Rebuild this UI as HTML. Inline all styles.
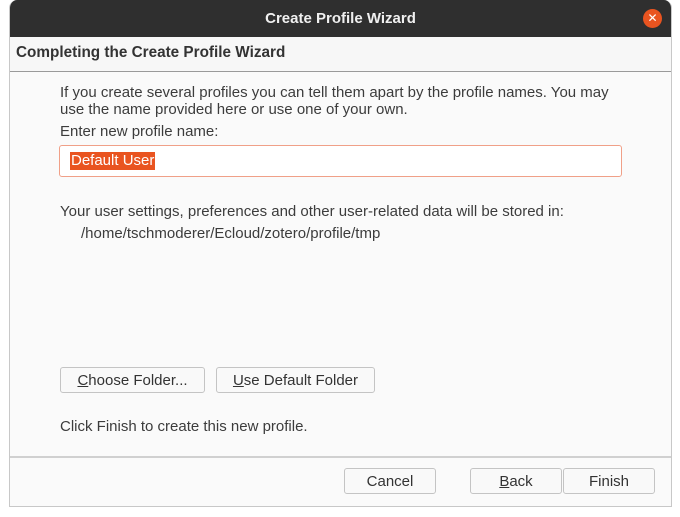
<!DOCTYPE html>
<html><head><style>
body{margin:0;width:680px;height:517px;background:#fff;position:relative;font-family:"Liberation Sans",sans-serif;font-size:15px;color:#3c3c3c;overflow:hidden}
.win{position:absolute;left:9px;top:0;width:663px;height:507px;background:#fafafa;border:1px solid #c8c8c8;border-top:none;box-sizing:border-box;border-radius:8px 8px 0 0;overflow:hidden}
.title{position:absolute;left:0;top:0;right:0;height:37px;background:#2f2f2f;color:#f0f0f0;font-weight:bold;font-size:15px;text-align:center;line-height:37px}
.close{position:absolute;left:633px;top:9px;width:19px;height:19px;border-radius:50%;background:#e95420;color:#fff;font-size:12px;line-height:19px;text-align:center;font-weight:normal}
.hdr{position:absolute;left:0;right:0;top:37px;height:34px;background:#f7f7f7;border-bottom:1px solid #9a9a9a;font-weight:bold;font-size:15.3px;line-height:32px;padding-left:6px;color:#333}
.t{position:absolute;white-space:nowrap;line-height:18px}
.inp{position:absolute;left:49px;top:145px;width:563px;height:32px;box-sizing:border-box;border:1px solid #f0a088;border-radius:3px;background:#fff}
.sel{position:absolute;left:10px;top:6px;background:#e95420;color:#fff;padding:0 1px;line-height:18px}
.btn{position:absolute;height:26px;box-sizing:border-box;border:1px solid #c4c4c4;border-radius:3px;background:#f9f9f9;text-align:center;line-height:26px;color:#333}
.sep{position:absolute;left:0;right:0;top:456px;height:2px;background:#d0d0d0}
</style></head><body>
<div class="win">
<div class="title">Create Profile Wizard<div class="close">✕</div></div>
<div class="hdr">Completing the Create Profile Wizard</div>
<div class="t" style="left:50px;top:84px">If you create several profiles you can tell them apart by the profile names. You may</div>
<div class="t" style="left:50px;top:101px">use the name provided here or use one of your own.</div>
<div class="t" style="left:50px;top:123px">Enter new profile name:</div>
<div class="inp"><span class="sel">Default User</span></div>
<div class="t" style="left:50px;top:203px">Your user settings, preferences and other user-related data will be stored in:</div>
<div class="t" style="left:71px;top:225px">/home/tschmoderer/Ecloud/zotero/profile/tmp</div>
<div class="btn" style="left:50px;top:367px;width:145px"><u>C</u>hoose Folder...</div>
<div class="btn" style="left:206px;top:367px;width:159px"><u>U</u>se Default Folder</div>
<div class="t" style="left:50px;top:418px">Click Finish to create this new profile.</div>
<div class="sep"></div>
<div class="btn" style="left:334px;top:468px;width:92px">Cancel</div>
<div class="btn" style="left:460px;top:468px;width:92px"><u>B</u>ack</div>
<div class="btn" style="left:553px;top:468px;width:92px">Finish</div>
</div>
</body></html>
